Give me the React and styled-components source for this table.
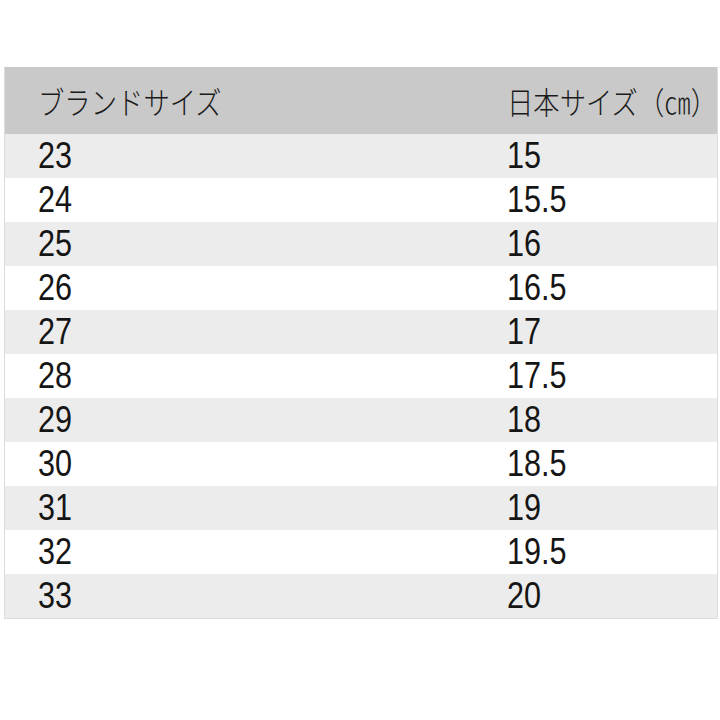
import React from "react";
import styled, { createGlobalStyle } from "styled-components";

const sizes = [
  ["23", "15"],
  ["24", "15.5"],
  ["25", "16"],
  ["26", "16.5"],
  ["27", "17"],
  ["28", "17.5"],
  ["29", "18"],
  ["30", "18.5"],
  ["31", "19"],
  ["32", "19.5"],
  ["33", "20"],
];

const GlobalStyle = createGlobalStyle`
  html, body {
    margin: 0;
    background: #ffffff;
  }
`;

export default function App() {
  return (
    <Page>
      <GlobalStyle />
      <Table>
        <HeaderRow>
          <HeaderCell>
            <Narrow>ブランドサイズ</Narrow>
          </HeaderCell>
          <HeaderCell>
            <Narrow>日本サイズ（㎝）</Narrow>
          </HeaderCell>
        </HeaderRow>
        {sizes.map(([brand, jp], i) => (
          <Row key={brand} shaded={i % 2 === 0}>
            <Cell>
              <Narrow>{brand}</Narrow>
            </Cell>
            <Cell>
              <Narrow>{jp}</Narrow>
            </Cell>
          </Row>
        ))}
      </Table>
    </Page>
  );
}

const Page = styled.div`
  width: 720px;
  height: 720px;
  padding: 67px 2px 0 4px;
  box-sizing: border-box;
`;

const Table = styled.div`
  border: 1px solid #dcdcdc;
  border-top: none;
  display: flex;
  flex-direction: column;
`;

const HeaderRow = styled.div`
  display: grid;
  grid-template-columns: 469px 1fr;
  height: 67px;
  align-items: center;
  background: #c9c9c9;
`;

// the reference uses a condensed face; squeeze the installed one to match
const Narrow = styled.span`
  display: inline-block;
  white-space: nowrap;
  transform: scaleX(0.85);
  transform-origin: left center;
`;

const HeaderCell = styled.div`
  padding-left: 33px;
  padding-top: 1px;
  font-family: "Noto Sans CJK JP", "Liberation Sans", sans-serif;
  font-weight: 300;
  font-size: 31px;
  line-height: 40px;
  color: #1a1a1a;
  white-space: nowrap;
`;

const Row = styled.div`
  display: grid;
  grid-template-columns: 469px 1fr;
  height: 44px;
  align-items: center;
  background: ${props => (props.shaded ? "#ececec" : "#ffffff")};
`;

const Cell = styled.div`
  padding-left: 33px;
  font-family: "Liberation Sans", Arial, sans-serif;
  font-size: 36px;
  line-height: 44px;
  color: #151515;
`;
